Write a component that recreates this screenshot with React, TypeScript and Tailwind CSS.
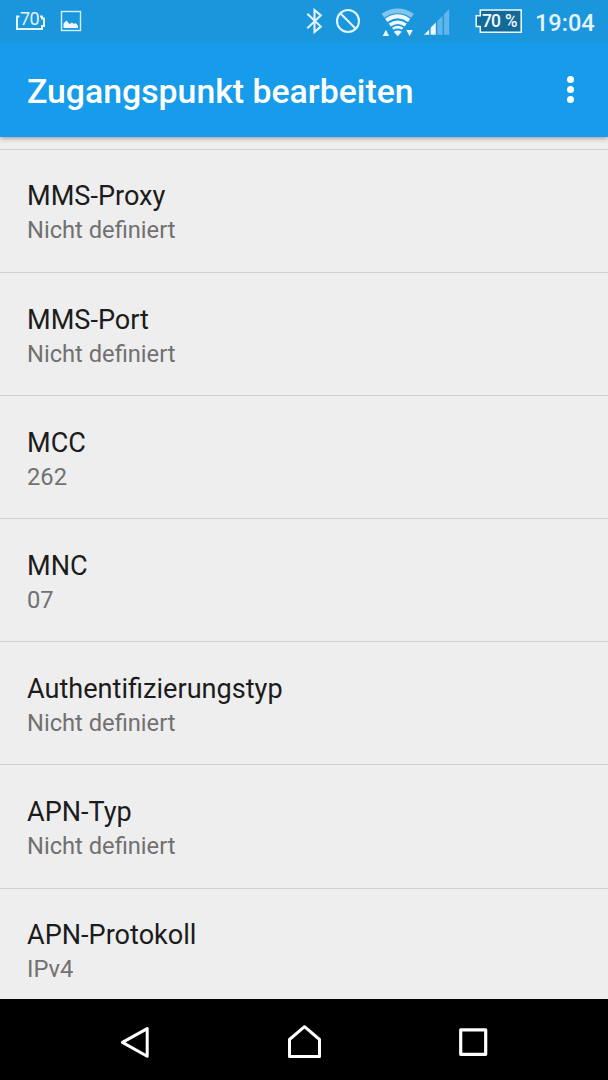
import React from 'react';

interface Preference {
  title: string;
  summary: string;
}

const preferences: Preference[] = [
  { title: 'MMS-Proxy', summary: 'Nicht definiert' },
  { title: 'MMS-Port', summary: 'Nicht definiert' },
  { title: 'MCC', summary: '262' },
  { title: 'MNC', summary: '07' },
  { title: 'Authentifizierungstyp', summary: 'Nicht definiert' },
  { title: 'APN-Typ', summary: 'Nicht definiert' },
  { title: 'APN-Protokoll', summary: 'IPv4' },
];

const BatteryLevelIcon = () => (
  <svg className="ml-[14px] shrink-0" width="32" height="42" viewBox="14 0 32 42" fill="none">
    <path d="M19.5 16.5H17V29H42V26H44V18.5H42V16.5H40" stroke="#e4f3fc" strokeWidth="2" />
    <text x="20" y="25.3" fill="#e4f3fc" fontSize="18" textLength="19.5" fontFamily="Roboto, sans-serif">
      70
    </text>
  </svg>
);

const PictureIcon = () => (
  <svg className="ml-[14px] shrink-0" width="22" height="42" viewBox="60 0 22 42">
    <rect x="61.5" y="11.5" width="19" height="19" fill="none" stroke="#d6edfa" strokeWidth="1.4" />
    <path d="M63.5 28V23.5L66.5 20.5L69.5 24L72 22.5L74 24L75.5 23L78 25.5V28Z" fill="#eef8fe" />
  </svg>
);

const BluetoothIcon = () => (
  <svg className="shrink-0" width="18" height="42" viewBox="305 0 18 42" fill="none">
    <path d="M307.3 13.8L320.8 26.6L314.5 32V10L320.8 15.4L307.3 28.2" stroke="#e4f3fc" strokeWidth="2.1" />
  </svg>
);

const BlockedIcon = () => (
  <svg className="ml-[12px] shrink-0" width="26" height="42" viewBox="335 0 26 42" fill="none">
    <circle cx="348" cy="21" r="11" stroke="#e4f3fc" strokeWidth="2.1" />
    <path d="M340.3 13.3L355.7 28.7" stroke="#e4f3fc" strokeWidth="2.1" />
  </svg>
);

const WifiIcon = () => (
  <svg className="ml-[19px] shrink-0" width="36" height="42" viewBox="380 0 36 42" fill="none">
    <path d="M382.9 15.8Q397.7 6 412.5 15.8" stroke="#80c5ed" strokeWidth="4.8" />
    <path d="M386.2 20.3Q397.7 12.2 409.2 20.3" stroke="#eef8fe" strokeWidth="4" />
    <path d="M389.7 25Q397.7 19.3 405.7 25" stroke="#eef8fe" strokeWidth="3.4" />
    <path d="M392.8 28.8Q397.7 25.4 402.6 28.8" stroke="#eef8fe" strokeWidth="2.6" />
    <path d="M393.7 31.8Q397.7 29 401.7 31.8L397.7 36.2Z" fill="#eef8fe" />
    <path d="M382.7 36L385.9 29.8L389.1 36Z" fill="#eef8fe" />
    <path d="M406.4 30L409.6 36.2L412.8 30Z" fill="#eef8fe" />
  </svg>
);

const SignalIcon = () => (
  <svg className="ml-[7px] shrink-0" width="28" height="42" viewBox="423 0 28 42">
    <path d="M424 34.8L429.2 29.6V34.8Z" fill="#eef8fe" />
    <path d="M430.6 34.8V27.7L435.8 22.5V34.8Z" fill="#eef8fe" />
    <path d="M437.3 34.8V21L442.6 15.7V34.8Z" fill="#60b6e8" />
    <path d="M444 34.8V14.2L449.2 9V34.8Z" fill="#60b6e8" />
  </svg>
);

const BatteryIcon = () => (
  <svg className="ml-[22px] shrink-0" width="51" height="42" viewBox="473 0 51 42">
    <path d="M480.3 10H521.2V32.3H480.3V26.6H476.2V15.7H480.3Z" fill="#126a99" stroke="#f2faff" strokeWidth="1.5" />
    <g fill="#f2faff" fontSize="17.5" fontWeight="500" fontFamily="Roboto, sans-serif">
      <text x="482" y="27" textLength="19">70</text>
      <text x="505" y="27" textLength="12.5" lengthAdjust="spacingAndGlyphs">%</text>
    </g>
  </svg>
);

const StatusBar = () => (
  <div className="relative z-20 flex h-[42px] shrink-0 items-center bg-[#1a96dc] text-[#e4f3fc]">
    <BatteryLevelIcon />
    <PictureIcon />
    <div className="ml-auto flex items-center pr-[13px]">
      <BluetoothIcon />
      <BlockedIcon />
      <WifiIcon />
      <SignalIcon />
      <BatteryIcon />
      <span className="ml-[11px] mt-[3px] w-[60px] text-[23.5px] leading-[28px] font-medium">19:04</span>
    </div>
  </div>
);

const Toolbar = () => (
  <header className="relative z-10 flex h-[95px] shrink-0 items-center justify-between bg-[#169ceb] pl-[27px] pr-[34px] text-white shadow-[0_1px_5px_rgba(0,0,0,0.4)]">
    <h1 className="mt-[5px] text-[33.8px] leading-[40px] font-medium whitespace-nowrap">Zugangspunkt bearbeiten</h1>
    <button aria-label="Weitere Optionen" className="flex flex-col gap-[3.2px]">
      <span className="size-[7px] rounded-full bg-white" />
      <span className="size-[7px] rounded-full bg-white" />
      <span className="size-[7px] rounded-full bg-white" />
    </button>
  </header>
);

const PreferenceRow: React.FC<{ item: Preference }> = ({ item }) => (
  <li className="h-[123.1px] border-t border-[#d2d2d2] pl-[27px] pt-[29.45px]">
    <div className="text-[27.1px] leading-[34px] text-[#1c1c1c]">{item.title}</div>
    <div className="text-[23.7px] leading-[34px] text-[#717171]">{item.summary}</div>
  </li>
);

const NavigationBar = () => (
  <nav className="flex h-[81px] shrink-0 items-center bg-black pl-[118px] pt-[4px]">
    <svg width="34" height="40" viewBox="118 1022 34 40" fill="none">
      <path d="M147.2 1028.6V1056.3L122.4 1042.4Z" stroke="#fff" strokeWidth="3" strokeLinejoin="round" />
    </svg>
    <svg className="ml-[133px]" width="40" height="40" viewBox="285 1022 40 40" fill="none">
      <path d="M289.5 1056.5V1039.5L304.5 1026.7L319.5 1039.5V1056.5Z" stroke="#fff" strokeWidth="3" strokeLinejoin="round" />
    </svg>
    <svg className="ml-[130px]" width="36" height="40" viewBox="455 1022 36 40" fill="none">
      <rect x="460.7" y="1029.8" width="25" height="24.5" stroke="#fff" strokeWidth="3.2" strokeLinejoin="round" />
    </svg>
  </nav>
);

export default function App() {
  return (
    <div className="flex h-[1080px] w-[608px] flex-col overflow-hidden bg-[#eee] font-['Roboto',sans-serif]">
      <StatusBar />
      <Toolbar />
      <main className="min-h-0 flex-1 overflow-hidden pt-[12px]">
        <ul>
          {preferences.map((item) => (
            <PreferenceRow key={item.title} item={item} />
          ))}
        </ul>
      </main>
      <NavigationBar />
    </div>
  );
}
